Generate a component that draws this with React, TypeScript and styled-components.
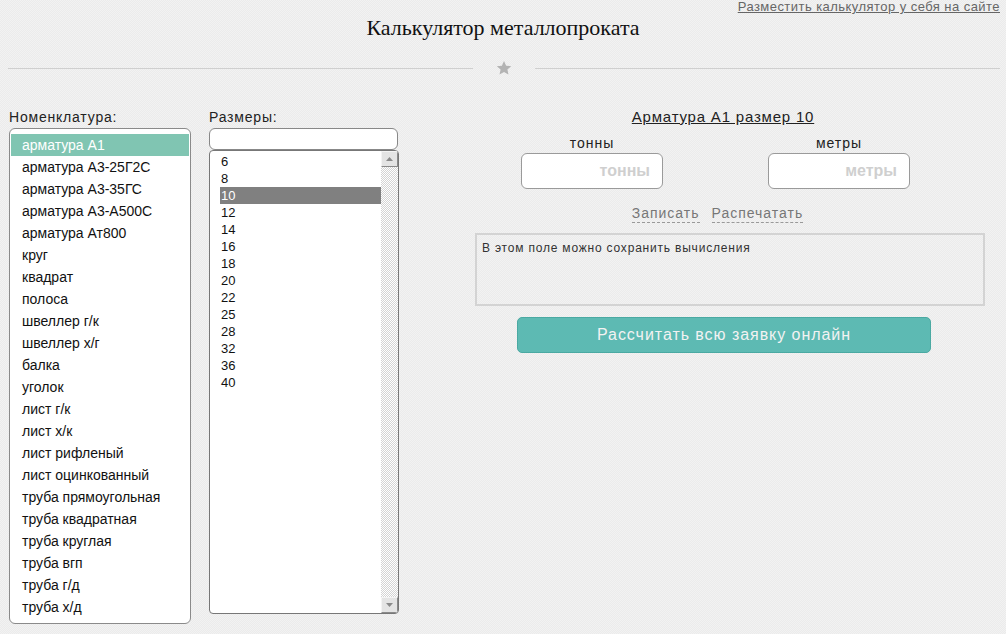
import React from "react";
import styled, { createGlobalStyle } from "styled-components";

const GlobalStyle = createGlobalStyle`
  html, body { margin: 0; padding: 0; }
  body {
    background-color: #eeeeee;
    background-image: repeating-conic-gradient(#ebebeb 0 25%, #f2f2f2 0 50%);
    background-size: 2px 2px;
    font-family: "Liberation Sans", Arial, sans-serif;
    color: #222;
  }
`;

const Page = styled.div`
  width: 1006px;
  min-height: 634px;
  box-sizing: border-box;
`;

const TopLink = styled.a`
  display: block;
  text-align: right;
  padding-right: 6px;
  font-size: 13px;
  line-height: 14px;
  color: #666;
  text-decoration: underline;
  letter-spacing: 0.45px;
`;

const Title = styled.h1`
  margin: 2px 0 0;
  text-align: center;
  font-family: "Liberation Serif", "Times New Roman", serif;
  font-weight: normal;
  font-size: 22px;
  line-height: 24px;
  color: #111;
`;

const Divider = styled.div`
  display: flex;
  align-items: center;
  height: 20px;
  margin-top: 18px;
  padding: 0 6px 0 8px;
`;

const Line = styled.div`
  flex: 1;
  height: 1px;
  background: #cfcfcf;
`;

const StarWrap = styled.div`
  width: 16px;
  height: 16px;
  margin: 0 23px;
  display: flex;
`;

const Main = styled.div`
  display: flex;
  align-items: flex-start;
  margin-top: 31px;
  padding-left: 9px;
`;

const Column = styled.div<{ $width: number; $gap?: number }>`
  width: ${(p) => p.$width}px;
  margin-left: ${(p) => p.$gap ?? 0}px;
  display: flex;
  flex-direction: column;
`;

const Label = styled.div`
  font-size: 14px;
  line-height: 16px;
  height: 16px;
  margin-bottom: 3px;
  color: #222;
  letter-spacing: 0.8px;
  white-space: nowrap;
`;

const ListBox = styled.div`
  height: 496px;
  box-sizing: border-box;
  border: 1px solid #8a8a8a;
  border-radius: 6px;
  background: #fff;
  padding: 5px 1px;
  overflow: hidden;
`;

const NomItem = styled.div<{ $selected?: boolean }>`
  height: 22px;
  line-height: 22px;
  padding-left: 11px;
  font-size: 14px;
  color: ${(p) => (p.$selected ? "#fff" : "#111")};
  background: ${(p) => (p.$selected ? "#80c5b2" : "transparent")};
  white-space: nowrap;
`;

const SizeInput = styled.div`
  width: 189px;
  height: 22px;
  box-sizing: border-box;
  border: 1px solid #888;
  border-radius: 6px;
  background: #fff;
`;

const SizeList = styled.div`
  width: 190px;
  height: 464px;
  box-sizing: border-box;
  border: 1px solid #777;
  border-radius: 4px;
  background: #fff;
  display: flex;
  overflow: hidden;
`;

const SizeItems = styled.div`
  flex: 1;
  padding: 2px 0 0 10px;
`;

const SizeItem = styled.div<{ $selected?: boolean }>`
  height: 17px;
  line-height: 17px;
  padding-left: 1px;
  font-size: 13px;
  color: ${(p) => (p.$selected ? "#fff" : "#111")};
  background: ${(p) => (p.$selected ? "#808080" : "transparent")};
`;

const ScrollBar = styled.div`
  width: 17px;
  display: flex;
  flex-direction: column;
  background-image: repeating-conic-gradient(#d4d4d4 0 25%, #ffffff 0 50%);
  background-size: 2px 2px;
`;

const ScrollBtn = styled.div`
  height: 16px;
  box-sizing: border-box;
  background: #e4e4e4;
  border-top: 1px solid #f4f4f4;
  border-left: 1px solid #f4f4f4;
  border-right: 1px solid #8a8a8a;
  border-bottom: 1px solid #8a8a8a;
  display: flex;
  align-items: center;
  justify-content: center;
`;

const Track = styled.div`
  flex: 1;
`;

const Right = styled.div`
  width: 510px;
  margin-left: 76px;
  display: flex;
  flex-direction: column;
`;

const Centered = styled.div<{ $pr?: number; $mt?: number }>`
  display: flex;
  justify-content: center;
  padding-right: ${(p) => p.$pr ?? 0}px;
  margin-top: ${(p) => p.$mt ?? 0}px;
`;

const ProductTitle = styled.a`
  font-size: 15px;
  line-height: 16px;
  color: #222;
  text-decoration: underline;
  letter-spacing: 0.8px;
`;

const FieldsRow = styled(Centered)`
  gap: 105px;
`;

const Field = styled.div`
  width: 142px;
  display: flex;
  flex-direction: column;
  align-items: center;
`;

const FieldLabel = styled.div`
  font-size: 14px;
  line-height: 16px;
  margin-bottom: 2px;
  color: #222;
  letter-spacing: 1px;
`;

const FieldInput = styled.div`
  width: 142px;
  height: 36px;
  box-sizing: border-box;
  border: 1px solid #9a9a9a;
  border-radius: 6px;
  background: #fff;
  display: flex;
  align-items: center;
  justify-content: flex-end;
  padding-right: 12px;
  font-size: 16px;
  font-weight: bold;
  color: #cfcfcf;
`;

const LinksRow = styled(Centered)`
  gap: 12px;
`;

const DashLink = styled.a`
  font-size: 14px;
  line-height: 16px;
  color: #777;
  text-decoration: none;
  border-bottom: 1px dashed #999;
  padding-bottom: 1px;
  letter-spacing: 1px;
`;

const Notes = styled.div`
  margin-top: 10px;
  height: 73px;
  box-sizing: border-box;
  border: 2px solid #d3d3d3;
  padding: 6px 5px;
  font-size: 12px;
  line-height: 14px;
  color: #333;
  letter-spacing: 0.8px;
`;

const CalcButton = styled.button`
  width: 414px;
  height: 36px;
  border: 1px solid #4aa9a2;
  border-radius: 5px;
  background: #5dbab3;
  color: #f2f2f2;
  font-family: "Liberation Sans", Arial, sans-serif;
  font-size: 16px;
  cursor: pointer;
  letter-spacing: 0.95px;
`;

const nomenclature = [
  "арматура А1",
  "арматура А3-25Г2С",
  "арматура А3-35ГС",
  "арматура А3-А500С",
  "арматура Ат800",
  "круг",
  "квадрат",
  "полоса",
  "швеллер г/к",
  "швеллер х/г",
  "балка",
  "уголок",
  "лист г/к",
  "лист х/к",
  "лист рифленый",
  "лист оцинкованный",
  "труба прямоугольная",
  "труба квадратная",
  "труба круглая",
  "труба вгп",
  "труба г/д",
  "труба х/д",
];

const sizes = ["6", "8", "10", "12", "14", "16", "18", "20", "22", "25", "28", "32", "36", "40"];

const Star = () => (
  <svg width="16" height="16" viewBox="0 0 24 24">
    <path
      d="M12 1.5l3.2 7 7.6.8-5.7 5.1 1.6 7.5L12 18l-6.7 3.9 1.6-7.5L1.2 9.3l7.6-.8z"
      fill="#b3b3b3"
    />
  </svg>
);

const Arrow = ({ up }: { up?: boolean }) => (
  <svg width="7" height="4" viewBox="0 0 7 4">
    <path d={up ? "M0 4L3.5 0 7 4z" : "M0 0L3.5 4 7 0z"} fill="#8a8a8a" />
  </svg>
);

export default function App() {
  return (
    <Page>
      <GlobalStyle />
      <TopLink href="#">Разместить калькулятор у себя на сайте</TopLink>
      <Title>Калькулятор металлопроката</Title>
      <Divider>
        <Line />
        <StarWrap>
          <Star />
        </StarWrap>
        <Line />
      </Divider>
      <Main>
        <Column $width={182}>
          <Label>Номенклатура:</Label>
          <ListBox>
            {nomenclature.map((n, i) => (
              <NomItem key={n} $selected={i === 0}>
                {n}
              </NomItem>
            ))}
          </ListBox>
        </Column>
        <Column $width={190} $gap={18}>
          <Label>Размеры:</Label>
          <SizeInput />
          <SizeList>
            <SizeItems>
              {sizes.map((s) => (
                <SizeItem key={s} $selected={s === "10"}>
                  {s}
                </SizeItem>
              ))}
            </SizeItems>
            <ScrollBar>
              <ScrollBtn>
                <Arrow up />
              </ScrollBtn>
              <Track />
              <ScrollBtn>
                <Arrow />
              </ScrollBtn>
            </ScrollBar>
          </SizeList>
        </Column>
        <Right>
          <Centered $pr={14}>
            <ProductTitle href="#">Арматура А1 размер 10</ProductTitle>
          </Centered>
          <FieldsRow $pr={29} $mt={10}>
            <Field>
              <FieldLabel>тонны</FieldLabel>
              <FieldInput>тонны</FieldInput>
            </Field>
            <Field>
              <FieldLabel>метры</FieldLabel>
              <FieldInput>метры</FieldInput>
            </Field>
          </FieldsRow>
          <LinksRow $pr={25} $mt={16}>
            <DashLink href="#">Записать</DashLink>
            <DashLink href="#">Распечатать</DashLink>
          </LinksRow>
          <Notes>В этом поле можно сохранить вычисления</Notes>
          <Centered $pr={12} $mt={11}>
            <CalcButton>Рассчитать всю заявку онлайн</CalcButton>
          </Centered>
        </Right>
      </Main>
    </Page>
  );
}
